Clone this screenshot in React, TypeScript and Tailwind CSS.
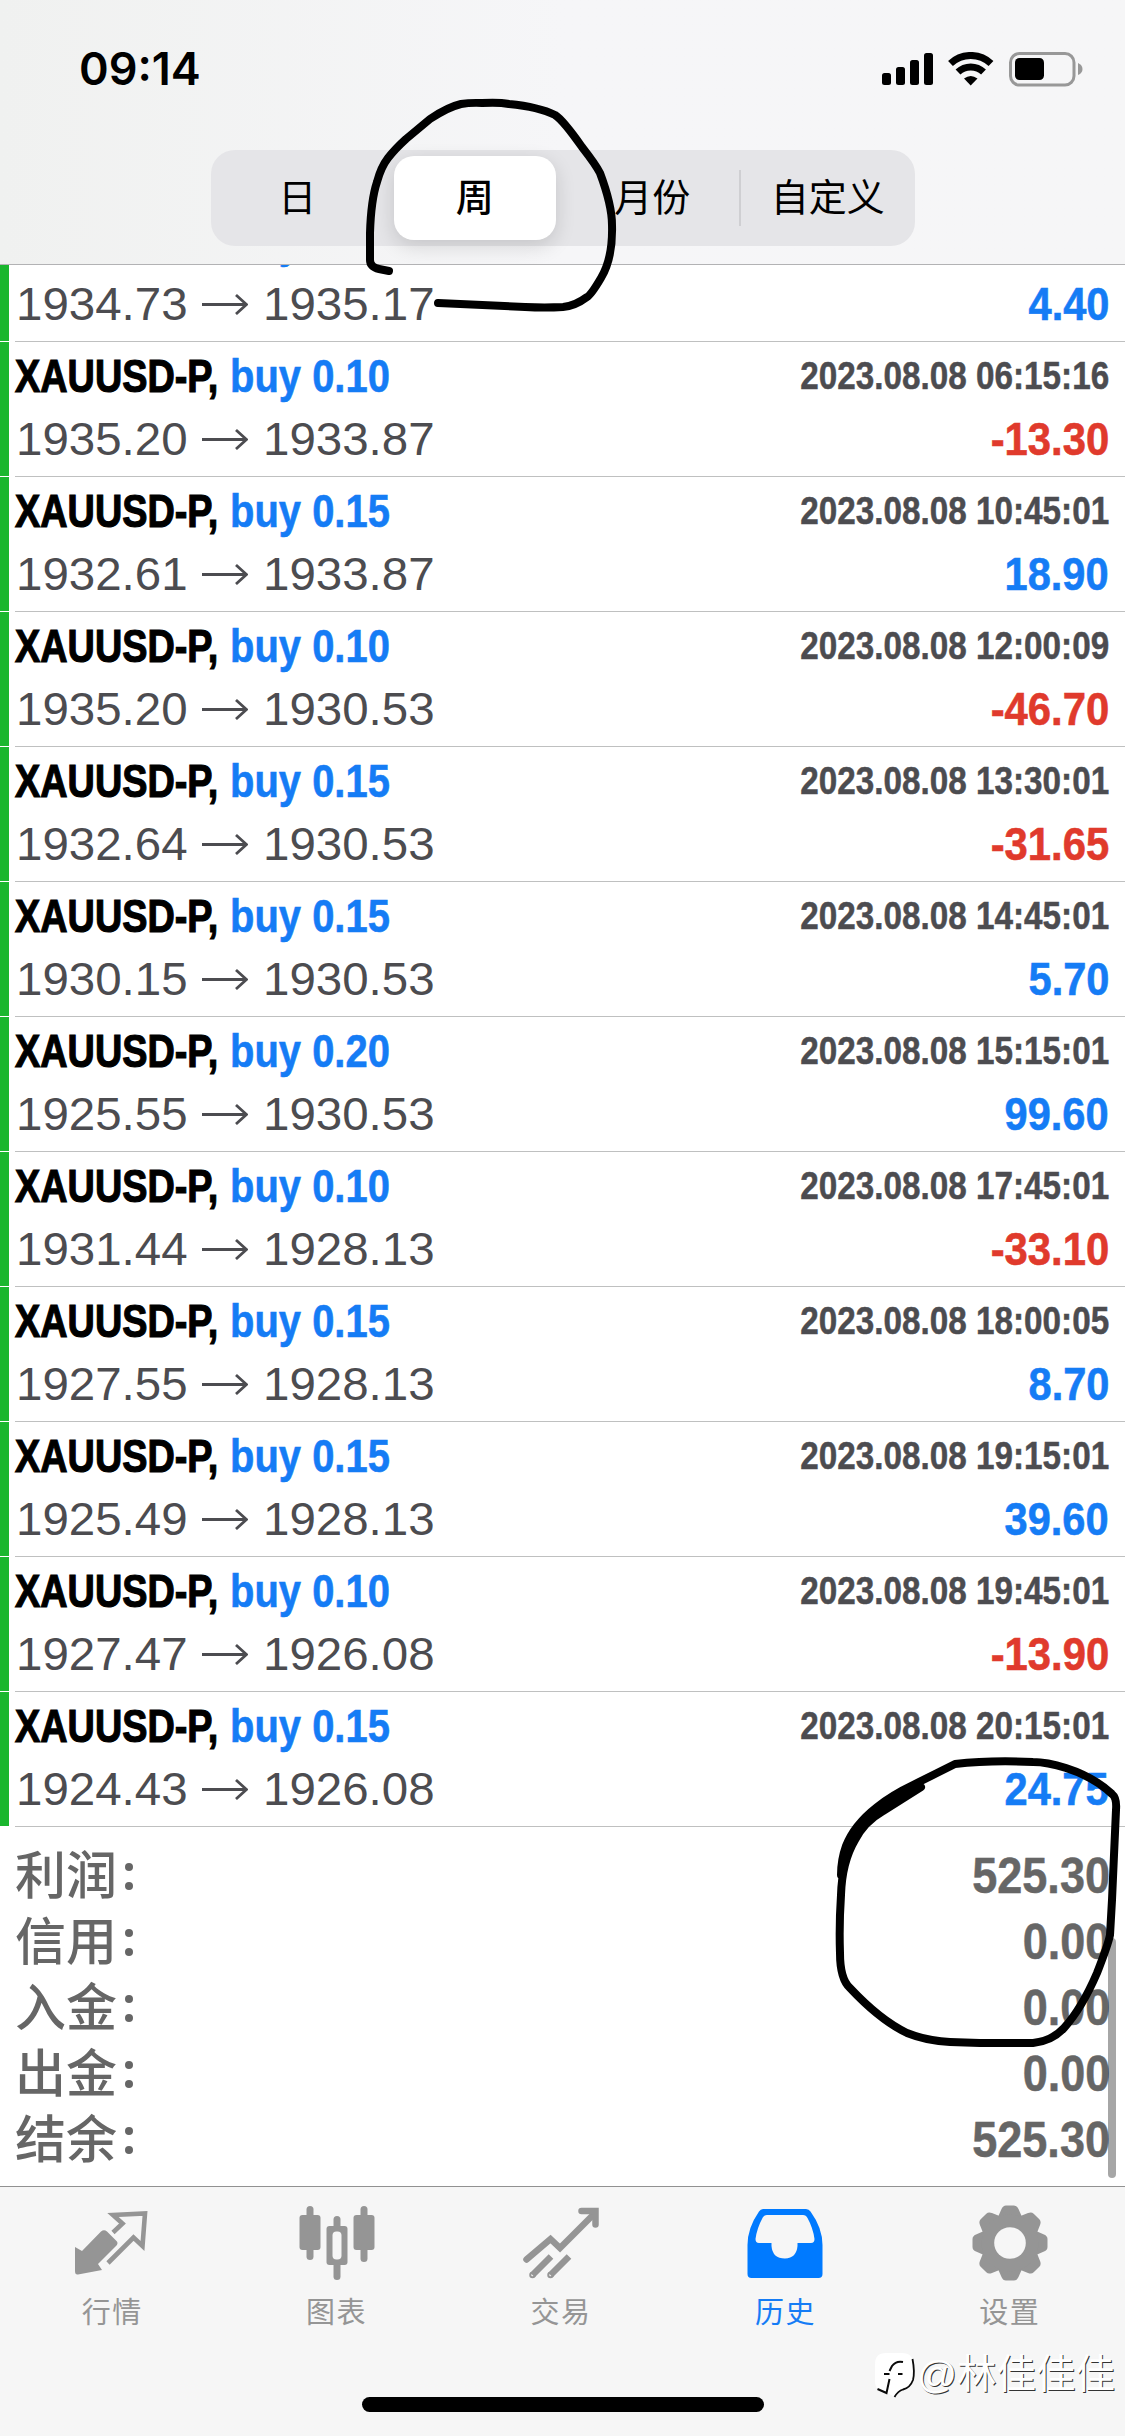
import React from 'react';

type Deal = { volume: string; from: string; to: string; time: string; profit: string };

const deals: Deal[] = [
  { volume: '0.10', from: '1934.73', to: '1935.17', time: '2023.08.08 05:30:01', profit: '4.40' },
  { volume: '0.10', from: '1935.20', to: '1933.87', time: '2023.08.08 06:15:16', profit: '-13.30' },
  { volume: '0.15', from: '1932.61', to: '1933.87', time: '2023.08.08 10:45:01', profit: '18.90' },
  { volume: '0.10', from: '1935.20', to: '1930.53', time: '2023.08.08 12:00:09', profit: '-46.70' },
  { volume: '0.15', from: '1932.64', to: '1930.53', time: '2023.08.08 13:30:01', profit: '-31.65' },
  { volume: '0.15', from: '1930.15', to: '1930.53', time: '2023.08.08 14:45:01', profit: '5.70' },
  { volume: '0.20', from: '1925.55', to: '1930.53', time: '2023.08.08 15:15:01', profit: '99.60' },
  { volume: '0.10', from: '1931.44', to: '1928.13', time: '2023.08.08 17:45:01', profit: '-33.10' },
  { volume: '0.15', from: '1927.55', to: '1928.13', time: '2023.08.08 18:00:05', profit: '8.70' },
  { volume: '0.15', from: '1925.49', to: '1928.13', time: '2023.08.08 19:15:01', profit: '39.60' },
  { volume: '0.10', from: '1927.47', to: '1926.08', time: '2023.08.08 19:45:01', profit: '-13.90' },
  { volume: '0.15', from: '1924.43', to: '1926.08', time: '2023.08.08 20:15:01', profit: '24.75' },
];

const totals = [
  ['利润', '525.30'],
  ['信用', '0.00'],
  ['入金', '0.00'],
  ['出金', '0.00'],
  ['结余', '525.30'],
];

function Arrow() {
  return (
    <svg className="h-6 w-[46px]" viewBox="0 0 46 24" fill="none" stroke="#4c4c50" strokeWidth="2.8">
      <path d="M0 13.500H44M34 4L44.500 13.500L34 23" />
    </svg>
  );
}

function DealRow({ deal }: { deal: Deal }) {
  const loss = deal.profit.startsWith('-');
  return (
    <div className="flex h-[135px]">
      <div className="mb-px w-[9px] bg-[#1ab62e]" />
      <div className="ml-1.5 flex-1 border-b border-[#bfc0c0] pr-4">
        <div className="flex h-[67px] items-center">
          <span className="w-[215px]">
            <span className="inline-block origin-left scale-x-[.805] text-[47px] leading-none font-bold whitespace-nowrap text-black [-webkit-text-stroke:1.2px_#000]">
              XAUUSD-P,
            </span>
          </span>
          <span className="w-[200px]">
            <span className="inline-block origin-left scale-x-[.85] text-[47px] leading-none font-bold whitespace-nowrap text-[#157cf5] [-webkit-text-stroke:0.6px_#157cf5]">
              buy {deal.volume}
            </span>
          </span>
          <span className="ml-auto origin-right scale-x-[.853] text-[39px] leading-none font-bold whitespace-nowrap text-[#4c4c50] [-webkit-text-stroke:0.5px_#4c4c50]">
            {deal.time}
          </span>
        </div>
        <div className="flex h-[58px] items-center text-[47px] leading-none">
          <span className="w-[187px] pl-px text-[#4c4c50]">
            <span className="inline-block origin-left scale-x-[1.01]">{deal.from}</span>
          </span>
          <Arrow />
          <span className="ml-[15px] text-[#4c4c50]">
            <span className="inline-block origin-left scale-x-[1.01]">{deal.to}</span>
          </span>
          <span
            className={
              loss
                ? 'ml-auto origin-right scale-x-[.89] font-bold text-[#e03a2c] [-webkit-text-stroke:0.6px_#e03a2c]'
                : 'ml-auto origin-right scale-x-[.885] font-bold text-[#157cf5] [-webkit-text-stroke:0.6px_#157cf5]'
            }
          >
            {deal.profit}
          </span>
        </div>
      </div>
    </div>
  );
}

function StatusBar() {
  return (
    <div className="flex h-[150px] items-start pt-[46px] pr-[41px] pl-[79px]">
      <div className="font-['Inter'] text-[45px] leading-[45px] font-semibold text-black">09:14</div>
      <svg className="mt-1.5 ml-auto h-[36px] w-[202px]" viewBox="0 0 202 36">
        <rect x="0" y="21" width="9" height="12" rx="2.500" />
        <rect x="14" y="15" width="9" height="18" rx="2.500" />
        <rect x="28" y="8" width="9" height="25" rx="2.500" />
        <rect x="42" y="1" width="9" height="32" rx="2.500" />
        <g fill="none" stroke="#000" strokeWidth="7">
          <path d="M68.500 11.500A29.500 29.500 0 0 1 109 11.500" />
          <path d="M76 20A18.500 18.500 0 0 1 101.500 20" />
        </g>
        <path d="M82 26.500Q88.700 21.500 95.500 26.500L88.700 33.500Z" />
        <rect x="128.500" y="1.500" width="63.500" height="31.500" rx="9" fill="none" stroke="#989898" strokeWidth="3" />
        <rect x="133" y="6" width="29" height="22" rx="4.500" />
        <path d="M196 11Q200.500 13 200.500 17Q200.500 21 196 23Z" fill="#989898" />
      </svg>
    </div>
  );
}

function PeriodPicker() {
  return (
    <div className="mx-auto flex h-24 w-[704px] items-center rounded-[24px] bg-[#e5e5e8] text-[38px] leading-none text-black">
      <div className="flex-1 pr-1 text-center">日</div>
      <div className="flex flex-1 justify-center">
        <div className="flex h-[84px] w-[162px] items-center justify-center rounded-[20px] bg-white font-medium shadow-[0_6px_20px_rgba(0,0,0,.14)]">
          周
        </div>
      </div>
      <div className="flex-1 pl-1 text-center">月份</div>
      <div className="h-14 w-0.5 bg-[#cfcfd2]" />
      <div className="flex-1 text-center">自定义</div>
    </div>
  );
}

function QuotesIcon() {
  return (
    <svg className="h-[76px] w-[76px]" viewBox="0 0 76 76" fill="#959595">
      <path d="M1 42L8 46L27 26.500Q30 24 33 26.500L42.500 36Q44.500 38 42.500 40.500L24 59L28 65L4 69.500Q1 70 1 66Z" />
      <path
        d="M39 27.500L48.500 18.500L39 10L71 8.500L68.500 41L59.500 32.500L34 58"
        fill="none"
        stroke="#959595"
        strokeWidth="4.600"
      />
    </svg>
  );
}

function ChartIcon() {
  return (
    <svg className="h-[76px] w-[76px]" viewBox="0 0 76 76" fill="#959595">
      <rect x="7.500" y="1" width="7" height="54" rx="3.500" />
      <rect x="0.500" y="10" width="21" height="35" rx="3" />
      <rect x="61.500" y="1" width="7" height="56" rx="3.500" />
      <rect x="54.500" y="10" width="21" height="35" rx="3" />
      <rect x="34.500" y="11" width="7" height="64" rx="3.500" />
      <rect x="27.500" y="21" width="21" height="39" rx="3" />
      <rect x="33.500" y="26.500" width="9" height="28" rx="4" fill="#f6f6f6" />
    </svg>
  );
}

function TradeIcon() {
  return (
    <svg className="h-[76px] w-[76px]" viewBox="0 0 76 76" fill="none" stroke="#959595">
      <path d="M3.500 54.500L27.500 34L37 43L71 9" strokeWidth="6.500" strokeLinecap="round" />
      <path d="M58.500 6H72.500V19.500" strokeWidth="6.500" strokeLinecap="round" />
      <path d="M9.500 70L28 51.500M27.500 70L46 51.500" strokeWidth="6.500" />
      <circle cx="9.500" cy="70" r="1" strokeWidth="4.500" />
      <circle cx="27.500" cy="70" r="1" strokeWidth="4.500" />
    </svg>
  );
}

function HistoryIcon() {
  return (
    <svg className="h-[76px] w-[76px]" viewBox="0 0 76 76" fill="#007aff">
      <path
        fillRule="evenodd"
        d="M16 4H59Q62 4 63.500 6.500Q75.500 23 75.500 40V69Q75.500 73 71.500 73H4.500Q0.500 73 0.500 69V40Q0.500 23 12 6.500Q13.500 4 16 4ZM20 10Q17 10 15.500 13Q10 23 8.500 34Q8.500 38 12 38H24.500V41Q25.500 53.500 38 53.500Q49.500 53 50.500 41V38H64Q67.500 38 67.500 34Q66 23 60.500 13Q59 10 56 10Z"
      />
    </svg>
  );
}

function SettingsIcon() {
  const angles = [0, 45, 90, 135];
  return (
    <svg className="h-[76px] w-[76px]" viewBox="0 0 76 76" fill="#959595">
      {angles.map((a) => (
        <path
          key={a}
          transform={`rotate(${a} 38 38)`}
          d="M26 12L29.500 4Q31 0.500 34 0.500H42Q45 0.500 46.500 4L50 12V64L46.500 72Q45 75.500 42 75.500H34Q31 75.500 29.500 72L26 64Z"
        />
      ))}
      <circle cx="38" cy="38" r="28.500" />
      <circle cx="38" cy="38" r="15.800" fill="#f6f6f6" />
    </svg>
  );
}

const tabs = [
  { label: '行情', icon: <QuotesIcon />, active: false },
  { label: '图表', icon: <ChartIcon />, active: false },
  { label: '交易', icon: <TradeIcon />, active: false },
  { label: '历史', icon: <HistoryIcon />, active: true },
  { label: '设置', icon: <SettingsIcon />, active: false },
];

function Watermark() {
  return (
    <div className="absolute top-[2350px] left-[874px] flex items-center">
      <svg className="h-[48px] w-[42px]" viewBox="0 0 42 48">
        <path
          d="M12 3H28Q39 3 39 14V29Q39 38 30 40.500Q24 42 20.500 47L12 42Q1 42 1 31V14Q1 3 12 3Z"
          fill="#fff"
        />
        <g fill="none" stroke="#0a0a0a">
          <path d="M38.500 9Q41 22 39 30Q36 38 29 39.500Q24 41 20.500 47" strokeWidth="1.800" />
          <path d="M29 12Q22 10.500 18 16L15.500 21M10 24H15.500M24 24H28.500M15.500 29L12.500 43L3.500 39" strokeWidth="2" />
        </g>
      </svg>
      <div className="ml-px text-[39.500px] leading-[44px] whitespace-nowrap text-white [text-shadow:1px_1px_0.500px_#333]">
        @林佳佳佳
      </div>
    </div>
  );
}

function Annotations() {
  return (
    <svg
      className="pointer-events-none absolute inset-0 h-[2436px] w-[1125px]"
      viewBox="0 0 1125 2436"
      fill="none"
      stroke="#000"
      strokeWidth="8"
      strokeLinecap="round"
      strokeLinejoin="round"
    >
      <path d="M389 271L379 269Q370 267 370 260V233Q371 200 377 182Q381 167 388 158Q395 149 406 139L430 119Q448 107 461 104Q470 102.500 482 103Q499 102 509 104Q539 107 555 115Q563 120 582 147Q596 165 600 173Q612 205 612 225Q613 258 601 278Q591 295 587 297Q575 306 563 307Q545 308 525 307L438 303" />
      <path d="M921 1787L883 1811Q864 1822 855 1840Q842 1862 841 1895Q839 1925 840 1953Q840 1979 850 1988Q880 2020 907 2033Q927 2041 950 2042L980 2043H1033Q1052 2041 1064 2028Q1082 2008 1097 1973Q1108 1945 1110 1935L1112 1900L1116 1810Q1117 1798 1112 1794Q1094 1777 1066 1768Q1047 1762 1033 1762Q990 1760 955 1764L937 1773L913 1785Q892 1795 877 1807Q854 1825 846 1846Q841 1860 841 1875" />
    </svg>
  );
}

export default function App() {
  return (
    <div className="relative flex h-[2436px] w-[1125px] flex-col overflow-hidden bg-white font-['Liberation_Sans','Noto_Sans_CJK_SC',sans-serif]">
      <header className="relative z-10 h-[265px] shrink-0 border-b border-[#b2b2b4] bg-linear-to-r from-[#f0f1f0] via-[#f6f6f8] to-[#f6f6f7]">
        <StatusBar />
        <PeriodPicker />
      </header>

      <main className="relative -mt-[58px] h-[1979px] shrink-0">
        {deals.map((deal, i) => (
          <DealRow key={i} deal={deal} />
        ))}
        <div className="pt-4 pr-[15px] pl-[15px]">
          {totals.map(([label, value]) => (
            <div key={label} className="flex h-[66px] items-center justify-between text-[#666]">
              <span className="flex items-center text-[51px] leading-none font-medium">
                {label}
                <span className="ml-2 flex flex-col gap-[11px]">
                  <i className="size-2 rounded-full bg-[#666]" />
                  <i className="size-2 rounded-full bg-[#666]" />
                </span>
              </span>
              <span className="origin-right scale-x-[.9] text-[50px] leading-none font-bold [-webkit-text-stroke:0.5px_#666]">
                {value}
              </span>
            </div>
          ))}
        </div>
        <div className="absolute right-[9px] bottom-2 h-[240px] w-2 rounded-full bg-black/35" />
      </main>

      <footer className="flex flex-1 flex-col items-center border-t border-[#919191] bg-[#f6f6f6]">
        <nav className="flex w-full pt-[18px] pr-[3px]">
          {tabs.map((tab) => (
            <div
              key={tab.label}
              className={
                tab.active
                  ? 'flex flex-1 flex-col items-center text-[#157cf5]'
                  : 'flex flex-1 flex-col items-center text-[#959595]'
              }
            >
              {tab.icon}
              <span className="mt-[15px] text-[29px] leading-[34px] tracking-[1.500px]">{tab.label}</span>
            </div>
          ))}
        </nav>
        <div className="mt-[67px] h-[15px] w-[402px] rounded-full bg-black" />
      </footer>

      <Watermark />
      <div className="absolute inset-0 z-20">
        <Annotations />
      </div>
    </div>
  );
}
